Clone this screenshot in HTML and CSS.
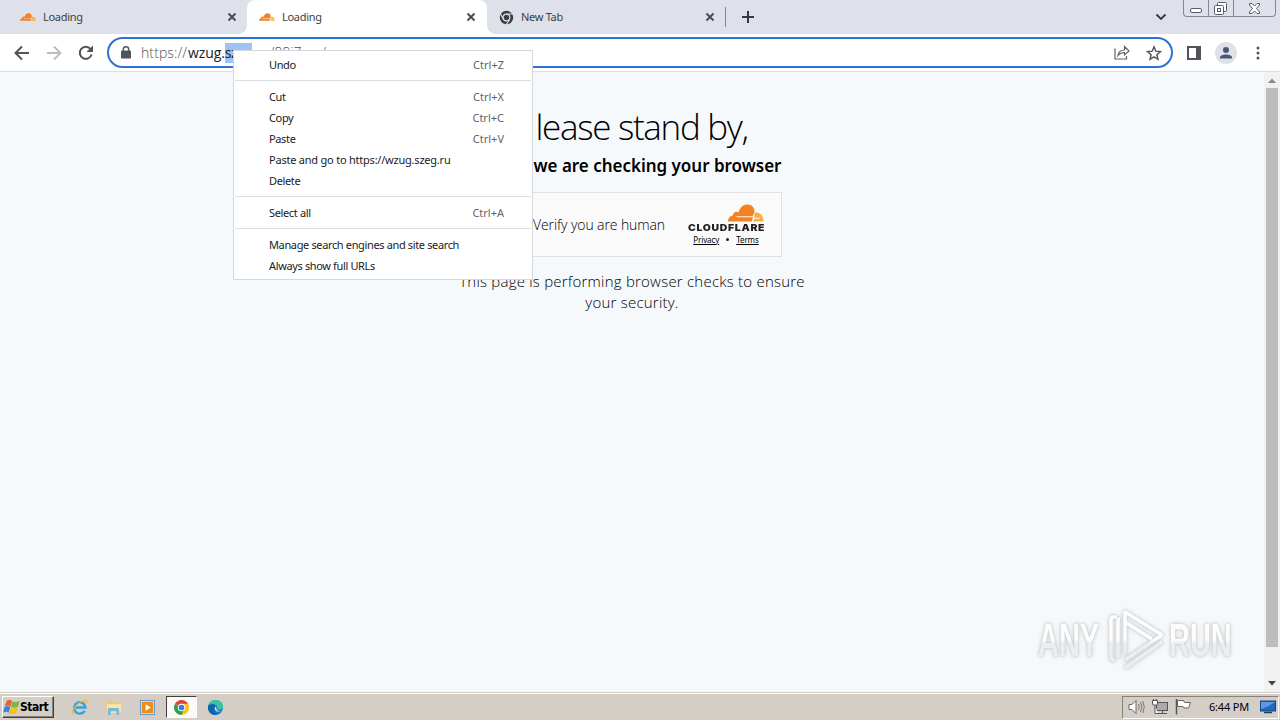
FILE: index.html
```html
<!DOCTYPE html>
<html lang="en">

<head>
    <meta charset="UTF-8">
    <title>Loading</title>
    <link rel="stylesheet" href="styles.css">
</head>

<body>
    <svg class="defs">
        <symbol id="cloud" viewBox="0 0 38 19">
            <path fill="#f6821f" d="M0 18.500C0 15 2 12.500 5 12.500C5 9 8.500 7 11 9C13 3 16 .5 20.500 .5C25.500 .5 28 4 28 8.500L26 13H9v1h17.500L25 18.500z" />
            <path fill="#fbad41" d="M28.500 9C34 8.500 37.500 12.500 37.500 18.500H26.500L27.500 15.500H33.500v-1H28L27.500 13z" />
        </symbol>
        <symbol id="close" viewBox="0 0 10 10">
            <path d="M1.500 1.500l7 7M8.500 1.500l-7 7" stroke="#44474c" stroke-width="1.800" />
        </symbol>
    </svg>
    <div class="screen">
        <div class="tabs">
            <div class="tab tab-first">
                <svg class="favicon" viewBox="0 0 38 19"><use href="#cloud" /></svg>
                <span>Loading</span>
                <svg class="close"><use href="#close" /></svg>
            </div>
            <div class="tab active">
                <svg class="favicon" viewBox="0 0 38 19"><use href="#cloud" /></svg>
                <span>Loading</span>
                <svg class="close"><use href="#close" /></svg>
            </div>
            <div class="tab tab-new">
                <svg class="favicon" viewBox="0 0 16 16">
                    <circle cx="8" cy="8" r="7.200" fill="#3c4043" />
                    <circle cx="8" cy="8" r="3.600" fill="#3c4043" stroke="#dee1e9" stroke-width="1.300" />
                    <path d="M8 4.200h7M4.700 9.900L1.400 4M11.300 9.900L7.800 15.500" stroke="#dee1e9" stroke-width="1.200" />
                </svg>
                <span>New Tab</span>
                <svg class="close"><use href="#close" /></svg>
            </div>
            <div class="divider"></div>
            <svg class="plus" viewBox="0 0 12 12"><path d="M6 0v12M0 6h12" stroke="#35383d" stroke-width="2" /></svg>
            <svg class="chevron" viewBox="0 0 12 8"><path d="M1.500 1.500L6 6l4.500-4.500" fill="none" stroke="#35383d" stroke-width="1.800" /></svg>
            <div class="winbtns">
                <div class="min">
                    <svg width="12" height="6"><rect x=".5" y=".5" width="11" height="4" rx="1.500" fill="#fff" stroke="#555a66" /></svg>
                </div>
                <div class="max">
                    <svg width="13" height="13"><g fill="#fff" stroke="#555a66"><rect x="3.500" y=".5" width="9" height="9" rx="1" /><rect x=".5" y="3.500" width="9" height="9" rx="1" /><rect x="3.500" y="6.500" width="3" height="3" /></g></svg>
                </div>
                <div class="exit">
                    <svg width="13" height="11"><path d="M1.500.500h2.500l2.500 2.500 2.500-2.500h2.500v1.500l-3 3.500 3 3.500v1.500h-2.500l-2.500-2.500-2.500 2.500H1.500V9l3-3.500-3-3.500z" fill="#fff" stroke="#555a66" /></svg>
                </div>
            </div>
        </div>

        <div class="toolbar">
            <svg class="nav" viewBox="0 0 16 16"><path d="M15 8H2M8 1.500L1.500 8 8 14.500" fill="none" stroke="#505357" stroke-width="2" /></svg>
            <svg class="nav" viewBox="0 0 16 16"><path d="M1 8h13M8 1.500L14.500 8 8 14.500" fill="none" stroke="#b9bbbe" stroke-width="1.800" /></svg>
            <svg class="nav" viewBox="0 0 16 16"><path d="M13.600 9.500A6 6 0 1 1 12.500 4L14 5.800" fill="none" stroke="#505357" stroke-width="2" /><path d="M15 .5v6.500H8.500z" fill="#505357" /></svg>
            <div class="omnibox">
                <svg class="lock" viewBox="0 0 10 13"><rect y="4.500" width="10" height="8" rx="1" fill="#505357" /><path d="M2.300 5V3.500a2.700 2.700 0 0 1 5.400 0V5" fill="none" stroke="#505357" stroke-width="1.400" /></svg>
                <div class="url"><span class="scheme">https://</span><span class="host">wzug.</span><span class="sel">szeg</span><span class="host">.ru</span><span class="rest">/88iZscs/</span></div>
                <svg class="share" viewBox="0 0 16 15"><g fill="none" stroke="#5f6368" stroke-width="1.200"><path d="M1 3.500v10.500h11.500v-3" /><path d="M4 10.500c.5-4 3-5.500 6.500-5.500V1.500L15 6l-4.500 4V7.500C7.500 7.500 5.500 8.500 4 10.500z" /></g></svg>
                <svg class="star" viewBox="0 0 16 16"><path d="M8 1.800l1.800 4.400 4.700.4-3.600 3.100 1.100 4.600L8 11.800l-4 2.500 1.100-4.600L1.500 6.600l4.700-.4z" fill="none" stroke="#505357" stroke-width="1.400" /></svg>
            </div>
            <svg class="panel" viewBox="0 0 14 14"><path d="M0 0h14v14H0zM2 2v10h7V2z" fill="#505357" fill-rule="evenodd" /></svg>
            <svg class="avatar" viewBox="0 0 22 22"><circle cx="11" cy="11" r="11" fill="#dee1e6" /><circle cx="11" cy="8" r="3" fill="#4a5574" /><path d="M5 16.500v-1c0-4 12-4 12 0v1z" fill="#4a5574" /></svg>
            <svg class="dots" viewBox="0 0 4 14"><g fill="#505357"><circle cx="2" cy="2" r="1.500" /><circle cx="2" cy="7" r="1.500" /><circle cx="2" cy="12" r="1.500" /></g></svg>
        </div>

        <div class="view">
            <div class="page">
                <h1>Please stand by,</h1>
                <h2>While we are checking your browser</h2>
                <div class="widget">
                    <p>Verify you are human</p>
                    <div class="brand">
                        <svg class="logo" viewBox="0 0 38 19"><use href="#cloud" /></svg>
                        <b>CLOUDFLARE</b>
                        <div class="links"><u>Privacy</u><i></i><u>Terms</u></div>
                    </div>
                </div>
                <p class="note">This page is performing browser checks to ensure<br>your security.</p>
            </div>
            <div class="scrollbar">
                <svg viewBox="0 0 16 16"><path d="M4 11h8L8 6.500z" fill="#8a8a8a" /></svg>
                <div class="thumb"></div>
                <svg viewBox="0 0 16 16"><path d="M4 5h8l-4 4.500z" fill="#444" /></svg>
            </div>
        </div>

        <div class="taskbar">
            <div class="start">
                <svg viewBox="0 0 18 16">
                    <path d="M4 1.500C6 0 8 .5 9.500 1.500L8 7.500c-2-1.300-4-1.300-6 0z" fill="#e8602c" />
                    <path d="M10 2c2 1.200 4.500 1.200 7.500-.5L16 7.500c-2 1.500-5 1.700-7.500.5z" fill="#7ab648" />
                    <path d="M1.700 8c2-1.300 4-1.300 6 0L6 14c-2-1.300-4-1.300-6 0z" fill="#3f86d0" />
                    <path d="M8.200 8.500c2 1.200 5 1.200 7.500-.2L14 14.500c-2 1.400-5 1.400-7.300 0z" fill="#f8c21c" />
                </svg>
                <b>Start</b>
            </div>
            <div class="app">
                <svg viewBox="0 0 18 18"><path d="M14.500 12.500a6 6 0 1 1 .8-3.500H4" fill="none" stroke="#36a3dc" stroke-width="2.600" /><path d="M2 16C-1 13 8 2.500 15 1.500c2-.2 2 1.500 1 3" fill="none" stroke="#e9b93c" stroke-width="1.300" /></svg>
            </div>
            <div class="app">
                <svg viewBox="0 0 18 18"><path d="M1 2h6l1 1.500h8V14H1z" fill="#e6cb78" /><path d="M2 5.500h15v9H2z" fill="#f8e8a8" /><path d="M3 17v-6q0-1.500 1.500-1.500h9q1.500 0 1.500 1.500v6h-3v-4H6v4z" fill="#76b9df" /></svg>
            </div>
            <div class="app">
                <svg viewBox="0 0 18 18"><rect x="1.500" y="1.500" width="15" height="15" fill="#cfe3f5" stroke="#5b9bd0" /><rect x="3" y="3" width="12" height="12" fill="#f28a1a" /><path d="M7 5.500v7l5.500-3.500z" fill="#fff" /></svg>
            </div>
            <div class="app current">
                <svg viewBox="0 0 18 18"><path d="M9 9L2.100 5A8 8 0 0 1 15.900 5z" fill="#e04336" /><path d="M9 9L2.100 5A8 8 0 0 0 9 17l3.500-6z" fill="#2da14e" /><path d="M9 17A8 8 0 0 0 15.900 5H9l3.500 6z" fill="#fbc116" /><circle cx="9" cy="9" r="4" fill="#fff" /><circle cx="9" cy="9" r="3" fill="#3b78e7" /></svg>
            </div>
            <div class="app">
                <svg viewBox="0 0 18 18"><circle cx="9" cy="9" r="8" fill="#1a73c0" /><path d="M1.500 7C3-1 16-1 17 7.500c.5 4-4.500 4.500-6.500 3C12 8 9 5.500 6 5.500 4 5.500 2.500 6 1.500 7z" fill="#38c4a0" /><path d="M10 9.500c-.8 3 3 4 6 2.500q-3 2-6 1c-2-1-2-3.500-1-5z" fill="#d6e9ee" /><path d="M1 9c1-4 6-4.500 8-2-3 1.500-3 6 1.500 9.500C5 18 1 14 1 9z" fill="#1263ab" /></svg>
            </div>
            <div class="tray">
                <svg width="18" height="16" viewBox="0 0 18 16"><path d="M1 5.500h3l4-4v13l-4-4H1z" fill="#fff" stroke="#666" /><path d="M10.500 5q1.500 3 0 6M12.500 3q3 5 0 10M14.800 2q3 6 0 12" fill="none" stroke="#777" /></svg>
                <svg width="17" height="16" viewBox="0 0 17 16"><rect x="4.500" y="3.500" width="11" height="8" fill="#aaa" stroke="#555" /><path d="M4 14.500h11M10.500 12v2" stroke="#555" /><path d="M.5 1.500h5V5q0 1-1 1h-3q-1 0-1-1zM1.500 0v1.500M4.500 0v1.500M3 6v8.500h3" fill="#fff" stroke="#555" /></svg>
                <svg width="17" height="16" viewBox="0 0 17 16"><path d="M1.500 0v15.500" stroke="#555" stroke-width="1.500" /><path d="M2.500 1.500h6l1 2h6l-2 5.500H9L8 7.500H2.500z" fill="#fff" stroke="#666" /></svg>
                <span>6:44 PM</span>
                <svg width="16" height="14" viewBox="0 0 16 14"><rect x=".5" y="1" width="15" height="10" fill="#2467c2" stroke="#164587" /><path d="M1 2h14L8 6.500 1 9z" fill="#5d9ae6" /><path d="M4 12.500h8" stroke="#244" stroke-width="1.500" /></svg>
            </div>
        </div>

        <div class="menu">
            <div class="item"><span>Undo</span><em>Ctrl+Z</em></div>
            <hr>
            <div class="item"><span>Cut</span><em>Ctrl+X</em></div>
            <div class="item"><span>Copy</span><em>Ctrl+C</em></div>
            <div class="item"><span>Paste</span><em>Ctrl+V</em></div>
            <div class="item link"><span>Paste and go to https://wzug.szeg.ru</span></div>
            <div class="item"><span>Delete</span></div>
            <hr>
            <div class="item"><span>Select all</span><em>Ctrl+A</em></div>
            <hr>
            <div class="item"><span>Manage search engines and site search</span></div>
            <div class="item"><span>Always show full URLs</span></div>
        </div>

        <div class="watermark">
            <span>ANY</span>
            <svg viewBox="0 0 56 64">
                <defs>
                    <linearGradient id="fade" gradientUnits="userSpaceOnUse" x1="0" y1="0" x2="0" y2="64">
                        <stop offset=".5" stop-color="#fff" />
                        <stop offset=".55" stop-color="#e9ebec" />
                    </linearGradient>
                </defs>
                <g fill="none" stroke="url(#fade)" stroke-width="3.500" stroke-linejoin="round">
                    <path d="M10 9H7q-3 0-3 3v37q0 3 4 3" />
                    <path d="M11 50V13q0-2 2-2" />
                    <path d="M18 46V4l37 23-37 25" />
                    <path d="M18 14l27 17" />
                    <path d="M18 60l37-26" />
                </g>
            </svg>
            <span>RUN</span>
        </div>
    </div>
</body>

</html>
```
FILE: styles.css
```css
* {
    padding: 0;
    margin: 0;
    box-sizing: border-box;
}

body {
    font-family: "Noto Sans", "Open Sans", sans-serif;
    overflow: hidden;
}

svg {
    display: block;
    flex: none;
}

.defs {
    position: absolute;
    width: 0;
    height: 0;
}

.screen {
    position: relative;
    width: 1280px;
    height: 720px;
    display: flex;
    flex-direction: column;
    background: #fff;
}

/* tabs */
.tabs {
    height: 34px;
    display: flex;
    align-items: center;
    background: #dee1e9;
}

.tab {
    width: 239px;
    height: 34px;
    display: flex;
    align-items: center;
    padding: 0 11px 0 12px;
    font-size: 11px;
    letter-spacing: -.3px;
    color: #3c4043;
}

.tab-first {
    width: 247px;
    padding-left: 20px;
    padding-right: 10px;
    background: #dee1e9;
}

.tab.active {
    width: 240px;
    background: #fff;
    border-radius: 8px 8px 0 0;
}

.tab-first,
.tab-new {
    position: relative;
}

.tab-first::after,
.tab-new::before {
    content: "";
    position: absolute;
    bottom: 0;
    width: 8px;
    height: 8px;
}

.tab-first::after {
    right: 0;
    background: radial-gradient(circle at 0 0, #dee1e9 7.500px, #fff 8px);
}

.tab-new::before {
    left: 0;
    background: radial-gradient(circle at 100% 0, #dee1e9 7.500px, #fff 8px);
}

.favicon {
    width: 16px;
    height: 16px;
    margin-right: 7px;
}

.tab-new .favicon {
    width: 15px;
    height: 15px;
}

.tab span {
    flex: 1;
    padding-bottom: 2px;
}

.close {
    width: 10px;
    height: 10px;
}

.divider {
    width: 1px;
    height: 20px;
    margin: 0 16px 0 -1px;
    background: #85888e;
}

.plus {
    width: 12px;
    height: 12px;
}

.chevron {
    width: 12px;
    height: 8px;
    margin-left: auto;
}

.winbtns {
    display: flex;
    align-self: flex-start;
    width: 93px;
    height: 17px;
    margin: 0 4px 0 16px;
    border: 1px solid #858994;
    border-top: 0;
    border-radius: 0 0 4px 4px;
}

.winbtns div {
    display: flex;
    align-items: center;
    justify-content: center;
    border-right: 1px solid #858994;
}

.winbtns .min {
    width: 25px;
    padding-top: 5px;
}

.winbtns .max {
    width: 25px;
    padding-right: 1px;
}

.winbtns .exit {
    flex: 1;
    border: 0;
}

/* toolbar */
.toolbar {
    height: 38px;
    display: flex;
    align-items: center;
    border-bottom: 1px solid #dcdee1;
    padding-left: 14px;
}

.nav {
    width: 16px;
    height: 16px;
    margin-right: 16px;
}

.omnibox {
    width: 1066px;
    height: 31px;
    margin-left: -3px;
    display: flex;
    align-items: center;
    padding: 0 9px 0 12px;
    border: 2px solid #2b72d2;
    border-radius: 16px;
}

.lock {
    width: 10px;
    height: 13px;
    margin-right: 10px;
}

.url {
    flex: 1;
    font-size: 14px;
    line-height: 20px;
    white-space: nowrap;
    display: flex;
}

.scheme,
.rest {
    color: #4f5256;
    font-family: "Open Sans", sans-serif;
    font-weight: 300;
}

.scheme {
    width: 47px;
    letter-spacing: .1px;
}

.host {
    color: #202124;
    font-family: "Open Sans", sans-serif;
    letter-spacing: -.1px;
}

.sel {
    width: 27px;
    background: #9fc3f4;
    color: #202124;
    overflow: hidden;
    letter-spacing: -.4px;
}

.share {
    width: 16px;
    height: 15px;
    margin-right: 16px;
}

.star {
    width: 16px;
    height: 16px;
}

.panel {
    width: 14px;
    height: 14px;
    margin-left: 14px;
}

.avatar {
    width: 22px;
    height: 22px;
    margin-left: 14px;
}

.dots {
    width: 4px;
    height: 14px;
    margin-left: 19px;
}

/* page */
.view {
    height: 620px;
    display: flex;
    background: #f5f9fc;
}

.page {
    width: 1264px;
    display: flex;
    flex-direction: column;
    align-items: center;
    padding-top: 32px;
    color: #000;
}

.page h1 {
    padding-right: 4px;
    font: 300 35px/46px "Open Sans", sans-serif;
    letter-spacing: -1.3px;
    white-space: nowrap;
}

.page h1::first-letter {
    margin-right: 4px;
}

.page h2 {
    margin-top: 4px;
    font-weight: 600;
    font-size: 17px;
    line-height: 24px;
    letter-spacing: -.02px;
    white-space: nowrap;
}

.widget {
    width: 300px;
    height: 65px;
    margin-top: 14px;
    padding: 0 16px 0 50px;
    display: flex;
    align-items: center;
    justify-content: space-between;
    background: #fafafa;
    border: 1px solid #dfe1e3;
}

.widget p {
    font: 300 14px/20px "Open Sans", sans-serif;
    letter-spacing: -.1px;
    white-space: nowrap;
}

.brand {
    width: 78px;
    display: flex;
    flex-direction: column;
}

.logo {
    width: 38px;
    height: 18px;
    margin-top: 1px;
    align-self: flex-end;
}

.brand b {
    width: 66px;
    font: 900 9px/10px "Inter", sans-serif;
    letter-spacing: .6px;
    margin: 1px 0 0 1px;
    color: #222;
    white-space: nowrap;
    transform: scaleX(1.160);
    transform-origin: 0 0;
}

.links {
    display: flex;
    align-items: center;
    justify-content: center;
    font-size: 8px;
    line-height: 14px;
    letter-spacing: -.1px;
}

.links i {
    width: 3px;
    height: 3px;
    margin: 0 7px;
    border-radius: 2px;
    background: #222;
}

.note {
    margin-top: 14px;
    font: 300 15px/21px "Open Sans", sans-serif;
    letter-spacing: .22px;
    text-align: center;
    white-space: nowrap;
}

.scrollbar {
    width: 16px;
    display: flex;
    flex-direction: column;
    align-items: center;
    justify-content: space-between;
    background: #f1f1f1;
}

.scrollbar svg {
    width: 16px;
    height: 16px;
}

.thumb {
    width: 12px;
    height: 559px;
    margin-bottom: auto;
    background: #bdbdbd;
}

/* taskbar */
.taskbar {
    height: 28px;
    display: flex;
    align-items: center;
    padding: 2px 0 0 2px;
    background: #d5cec6;
    box-shadow: inset 0 1px #d5cec6, inset 0 2px #fff;
}

.start {
    width: 52px;
    height: 22px;
    margin-right: 10px;
    display: flex;
    align-items: center;
    border: 1px solid;
    border-color: #fff #404040 #404040 #fff;
    box-shadow: inset -1px -1px #87827c;
    font: bold 12px/20px "DejaVu Sans Condensed", "DejaVu Sans", sans-serif;
    letter-spacing: -.5px;
}

.start svg {
    width: 17px;
    height: 16px;
}

.app {
    width: 31px;
    height: 22px;
    margin-right: 3px;
    display: flex;
    align-items: center;
    justify-content: center;
}

.app svg {
    width: 17px;
    height: 17px;
}

.app.current {
    background: #fbfaf9;
    border: 1px solid;
    border-color: #404040 #fff #fff #404040;
}

.tray {
    width: 157px;
    height: 23px;
    margin-left: auto;
    margin-right: 1px;
    padding-left: 5px;
    display: flex;
    align-items: center;
    gap: 6px;
    border: 1px solid;
    border-color: #87827c #fff #fff #87827c;
}

.tray span {
    width: 41px;
    margin: 0 5px 2px 11px;
    font-size: 11px;
    letter-spacing: -.2px;
    white-space: nowrap;
}

.tray svg:last-child {
    margin-left: -1px;
}

/* context menu over the address bar */
.menu {
    position: absolute;
    left: 233px;
    top: 50px;
    width: 300px;
    height: 230px;
    padding: 3px 1px;
    background: #fff;
    border: 1px solid #d5d7da;
}

.item {
    height: 21px;
    display: flex;
    justify-content: space-between;
    padding: 0 27px 0 34px;
    font-size: 11px;
    line-height: 21px;
    letter-spacing: -.36px;
    color: #202124;
    white-space: nowrap;
}

.item.link {
    letter-spacing: -.22px;
}

.item em {
    font-style: normal;
    letter-spacing: 0;
    color: #5f6368;
}

.menu hr {
    border: 0;
    height: 1px;
    margin: 5px 0;
    background: #dcdee1;
}

.watermark {
    position: absolute;
    left: 1038px;
    top: 608px;
    display: flex;
    align-items: center;
    filter: drop-shadow(0 0 1px #bbb) drop-shadow(0 0 2px #ccc);
    opacity: .8;
}

.watermark span {
    font: bold 46px/64px "Liberation Sans", sans-serif;
    width: 66px;
    color: transparent;
    background: linear-gradient(#fff 50%, #e9ebec 55%);
    background-clip: text;
    -webkit-background-clip: text;
    transform: scaleX(.63);
    transform-origin: 0 50%;
    padding-right: 100px;
    margin-right: -100px;
    box-sizing: content-box;
}

.watermark svg {
    width: 56px;
    height: 64px;
    margin: 0 6px 0 3px;
}
```
